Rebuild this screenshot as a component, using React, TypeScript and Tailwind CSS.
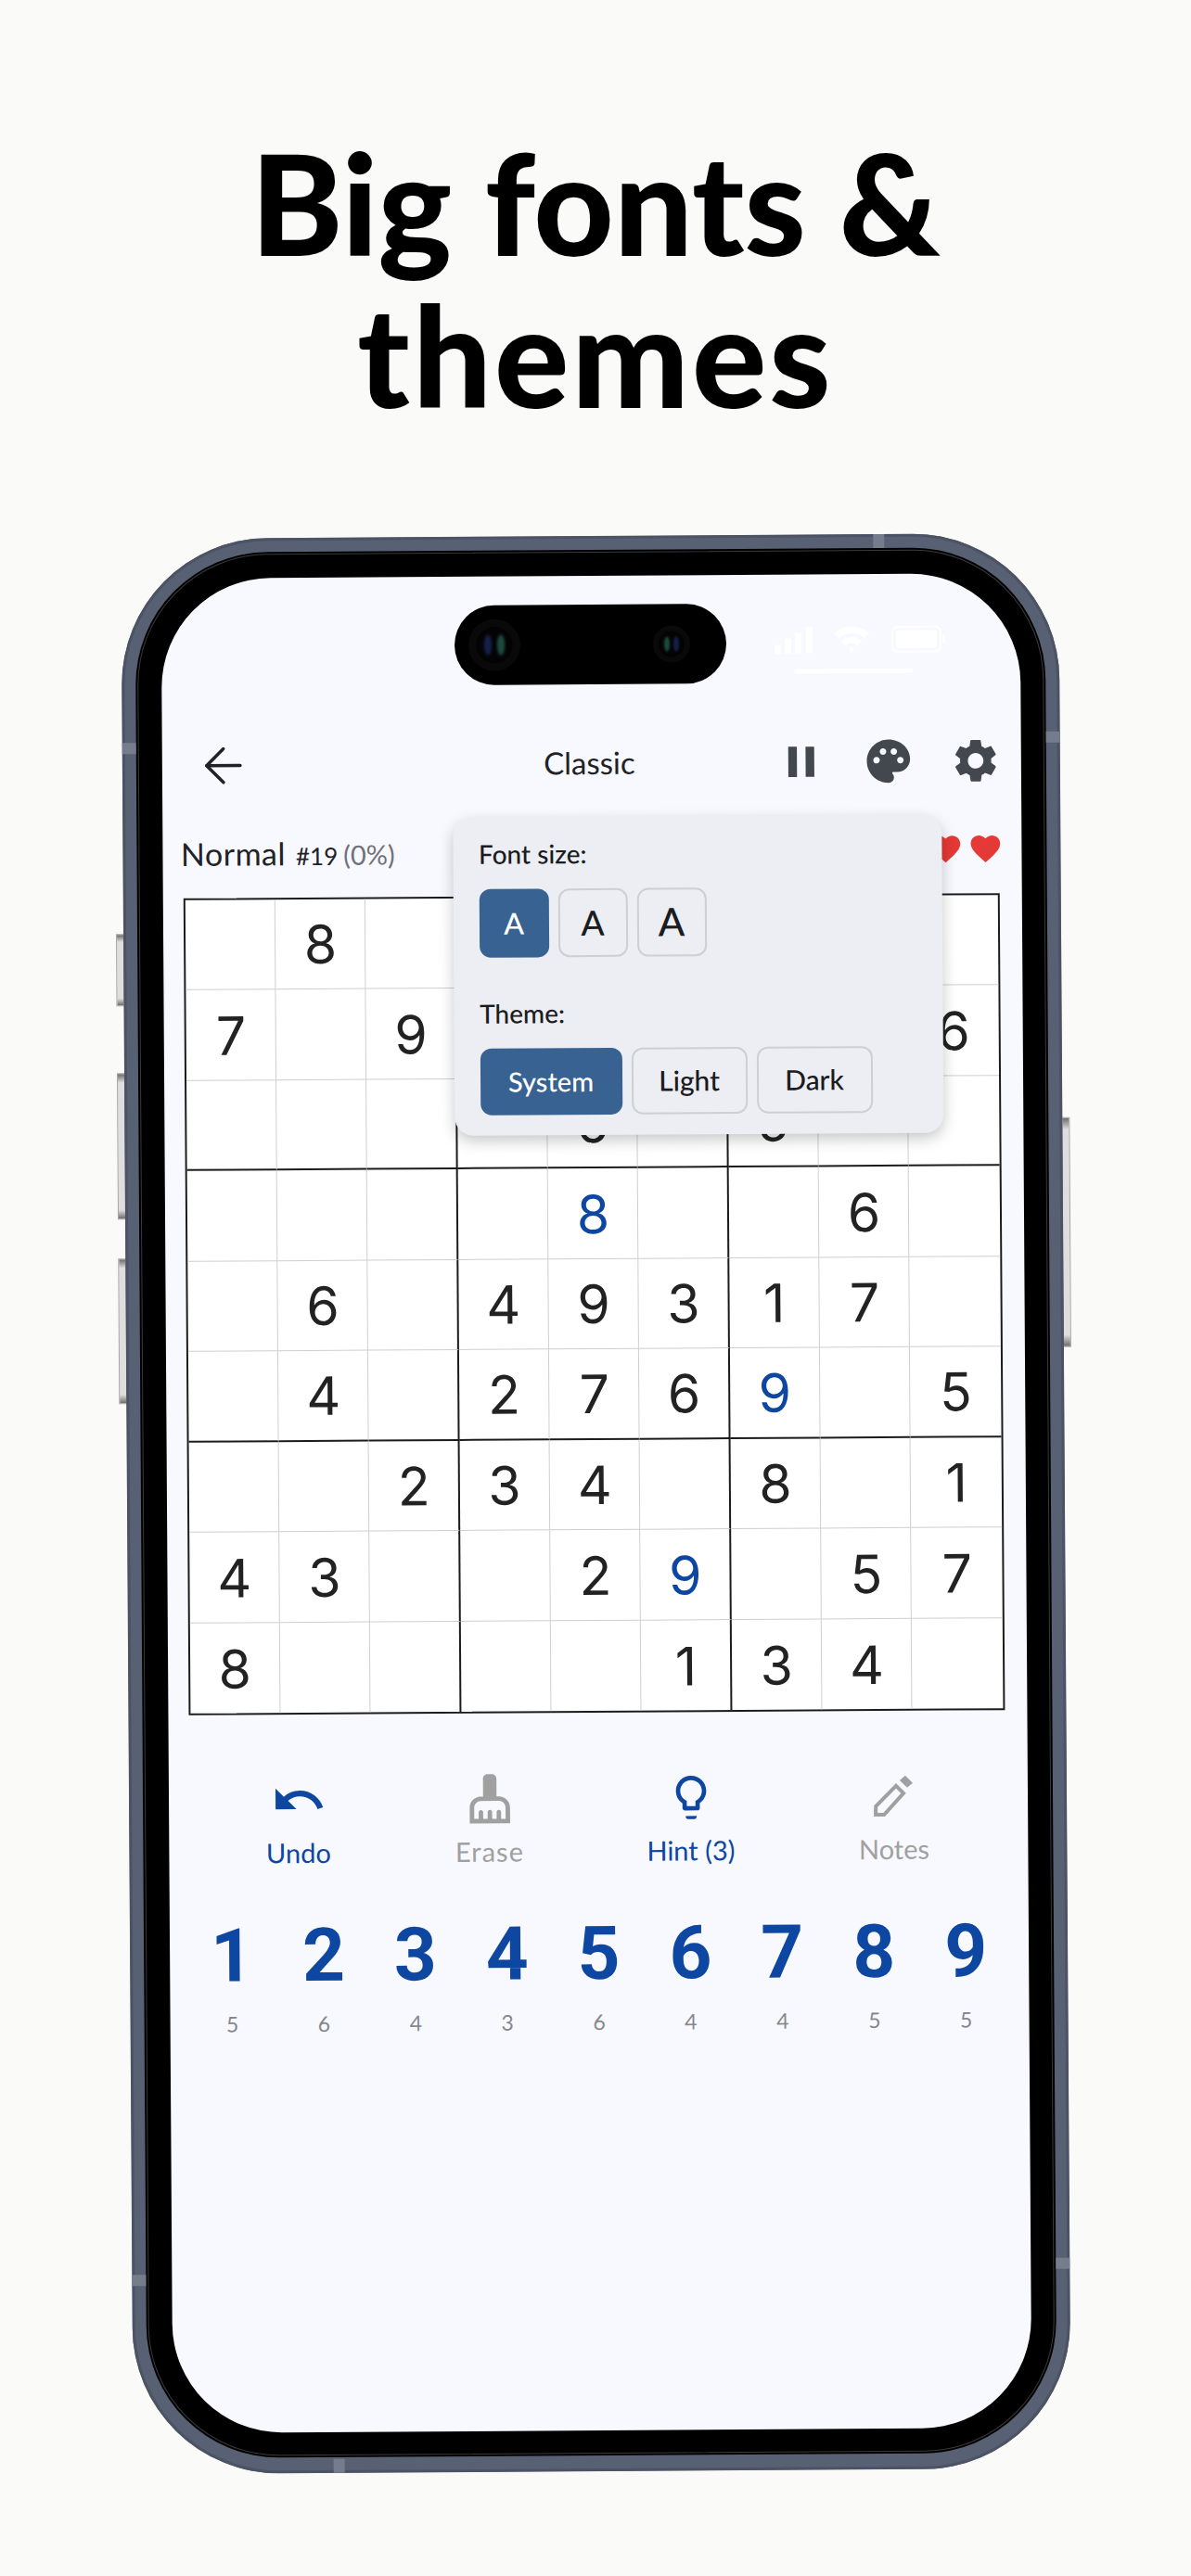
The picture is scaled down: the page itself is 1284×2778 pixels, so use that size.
import { ArrowLeft } from "lucide-react"
import { MdFavorite, MdPalette, MdPause, MdSettings, MdUndo } from "react-icons/md"

const board = [
  ["", "8", "", "", "", "", "", "", ""],
  ["7", "", "9", "", "", "", "", "", "6"],
  ["", "", "", "", "6", "", "5", "", ""],
  ["", "", "", "", "*8", "", "", "6", ""],
  ["", "6", "", "4", "9", "3", "1", "7", ""],
  ["", "4", "", "2", "7", "6", "*9", "", "5"],
  ["", "", "2", "3", "4", "", "8", "", "1"],
  ["4", "3", "", "", "2", "*9", "", "5", "7"],
  ["8", "", "", "", "", "1", "3", "4", ""],
]

const counts = [5, 6, 4, 3, 6, 4, 4, 5, 5]

function Camera({ size, flip }: { size: number; flip?: boolean }) {
  return (
    <svg width={size} height={size} viewBox="0 0 40 40">
      <circle cx="20" cy="20" r="20" fill="#090909" />
      <circle cx="20" cy="20" r="14" fill="#030304" />
      <ellipse className="blur-[1px]" cx={flip ? 25 : 15} cy="20" rx="3" ry="8" fill="#14204a" />
      <ellipse className="blur-[1px]" cx={flip ? 15 : 25} cy="20" rx="3" ry="8" fill="#1d4a3e" />
    </svg>
  )
}

function StatusIcons() {
  return (
    <svg className="absolute left-[661px] top-[56px]" width="190" height="52" viewBox="0 0 190 52" fill="#ffffff">
      <rect x="0" y="20" width="7" height="9" />
      <rect x="11" y="13" width="7" height="16" />
      <rect x="22" y="7" width="7" height="22" />
      <rect x="34" y="0" width="7" height="29" />
      <path d="M64 8 C74 -2 92 -2 102 8 L97 13 C90 6 76 6 69 13 Z" />
      <path d="M72 16 C78 10 88 10 94 16 L89 21 C85 17 81 17 77 21 Z" />
      <path d="M80 24 C82 22 84 22 86 24 L83 29 Z" />
      <rect x="127" y="1" width="52" height="27" rx="6" fill="none" stroke="#ffffff" strokeWidth="2" />
      <rect x="131" y="5" width="44" height="19" rx="3" />
      <rect x="181" y="10" width="3" height="9" rx="1" />
      <rect x="21" y="46" width="128" height="5" rx="2" />
    </svg>
  )
}

function Cell({ value, row, col }: { value: string; row: number; col: number }) {
  const right = col === 8 ? "" : col === 2 || col === 5 ? "border-r-2 border-r-[#1c1c1c]" : "border-r border-r-[#cfcfcf]"
  const bottom = row === 8 ? "" : row === 2 || row === 5 ? "border-b-2 border-b-[#1c1c1c]" : "border-b border-b-[#cfcfcf]"
  const hint = value.startsWith("*")
  return (
    <div className={`flex items-center justify-center h-[97.5px] pt-[2px] pl-[1px] ${right} ${bottom}`}>
      <span className={`font-[Inter,sans-serif] font-normal text-[57px] leading-none ${hint ? "text-[#0d47a1]" : "text-[#222222]"}`}>
        {value.replace("*", "")}
      </span>
    </div>
  )
}

function Popup() {
  return (
    <div className="absolute left-[313px] top-[260px] w-[527px] h-[343px] rounded-[20px] bg-[#eceef4] pl-[28px] pt-[22px] text-[#1b1c20] shadow-[0_6px_16px_rgba(0,0,0,0.22)]">
      <div className="h-[34px] text-[28px] leading-[34px] font-medium">Font size:</div>
      <div className="mt-[21px] flex gap-[10px]">
        <div className="flex items-center justify-center w-[75px] h-[74px] rounded-[12px] bg-[#376291] text-white text-[32px] font-medium">A</div>
        <div className="flex items-center justify-center w-[75px] h-[74px] rounded-[12px] border-2 border-[#cdcfd4] text-[37px] font-medium">A</div>
        <div className="flex items-center justify-center w-[75px] h-[74px] rounded-[12px] border-2 border-[#cdcfd4] text-[42px] font-medium">A</div>
      </div>
      <div className="mt-[43px] h-[34px] text-[28px] leading-[34px] font-medium">Theme:</div>
      <div className="mt-[21px] flex gap-[10px]">
        <div className="flex items-center justify-center w-[153px] h-[72px] rounded-[12px] bg-[#376291] text-white text-[29px] font-medium">System</div>
        <div className="flex items-center justify-center w-[125px] h-[72px] rounded-[12px] border-2 border-[#cdcfd4] text-[30px] font-medium">Light</div>
        <div className="flex items-center justify-center w-[125px] h-[72px] rounded-[12px] border-2 border-[#cdcfd4] text-[30px] font-medium">Dark</div>
      </div>
    </div>
  )
}

function Actions() {
  return (
    <div className="mt-[64px] pl-[33px] grid grid-cols-[214px_198px_236px_202px]">
      <div className="flex flex-col items-center text-[#0d47a1]">
        <div className="flex items-center justify-center h-[56px]">
          <MdUndo size={60} />
        </div>
        <div className="mt-[9px] h-[40px] text-[29px] leading-[40px]">Undo</div>
      </div>
      <div className="flex flex-col items-center text-[#a0a0a0]">
        <div className="flex items-center justify-center h-[56px]">
          <svg width="58" height="58" viewBox="0 0 24 24" fill="currentColor">
            <path d="M16 11h-1V3c0-1.1-.9-2-2-2h-2c-1.1 0-2 .9-2 2v8H8c-2.76 0-5 2.24-5 5v7h18v-7c0-2.76-2.24-5-5-5zm3 10h-2v-3c0-.55-.45-1-1-1s-1 .45-1 1v3h-2v-3c0-.55-.45-1-1-1s-1 .45-1 1v3H9v-3c0-.55-.45-1-1-1s-1 .45-1 1v3H5v-5c0-1.65 1.35-3 3-3h8c1.65 0 3 1.35 3 3v5z" />
          </svg>
        </div>
        <div className="mt-[9px] h-[40px] text-[29px] leading-[40px] tracking-[1px]">Erase</div>
      </div>
      <div className="flex flex-col items-center text-[#0d47a1]">
        <div className="flex items-center justify-center h-[56px]">
          <svg width="56" height="56" viewBox="0 0 24 24" fill="currentColor">
            <path d="M9.5 21c0 .5.4 1 1 1h3c.6 0 1-.5 1-1v-.4h-5v.4zm2.5-19C8.1 2 5 5.1 5 9c0 2.4 1.2 4.5 3 5.7V17c0 .5.4 1 1 1h6c.6 0 1-.5 1-1v-2.3c1.8-1.3 3-3.4 3-5.7 0-3.9-3.1-7-7-7zm2.9 11.1l-.9.6V16h-4v-2.3l-.8-.6C7.8 12.2 7 10.6 7 9c0-2.8 2.2-5 5-5s5 2.2 5 5c0 1.6-.8 3.2-2.1 4.1z" />
          </svg>
        </div>
        <div className="mt-[9px] h-[40px] text-[29px] leading-[40px]">Hint (3)</div>
      </div>
      <div className="flex flex-col items-center text-[#a0a0a0]">
        <div className="flex items-center justify-center h-[56px]">
          <svg width="43" height="44" viewBox="0 0 43 44" fill="currentColor">
            <path d="M2 42 V33 L24 11 L32 19 L11 42 Z" fill="none" stroke="currentColor" strokeWidth="4" />
            <path d="M0 44 V36 L8 44 Z" />
            <path d="M28 5 L34 0 L42 8 L36 13 Z" />
          </svg>
        </div>
        <div className="mt-[9px] h-[40px] text-[29px] leading-[40px]">Notes</div>
      </div>
    </div>
  )
}

function Screen() {
  return (
    <div className="relative h-[2000px] rounded-[118px] bg-[#f8f9ff] overflow-hidden">
      <div className="absolute left-[316px] top-[31px] w-[293px] h-[86px] rounded-full bg-black flex items-center justify-between pl-[15px] pr-[39px]">
        <Camera size={56} />
        <Camera size={40} flip />
      </div>
      <StatusIcons />

      <div className="pt-[171px]">
        <div className="h-[60px] grid grid-cols-[337px_178px_1fr] items-center pl-[35px] pr-[21px] text-[#1f2226]">
          <ArrowLeft size={62} strokeWidth={1.35} />
          <div className="text-center text-[33px] leading-none">Classic</div>
          <div className="flex justify-end gap-[38px] text-[#43474e]">
            <MdPause size={56} />
            <MdPalette size={56} />
            <MdSettings size={56} />
          </div>
        </div>

        <div className="mt-[41px] h-[50px] flex items-center justify-between pl-[20px] pr-[20px]">
          <div className="flex items-baseline text-[#1f2226]">
            <span className="text-[34px] tracking-[0.5px]">Normal</span>
            <span className="ml-[11px] text-[26px]">#19</span>
            <span className="ml-[6px] text-[29px] text-[#6f7278]">(0%)</span>
          </div>
          <div className="flex gap-[5px] text-[#e53935]">
            <MdFavorite size={38} />
            <MdFavorite size={38} />
          </div>
        </div>

        <div className="mt-[23px] ml-[22px] w-[880px] border-2 border-[#1c1c1c] bg-white grid grid-cols-9">
          {board.map((r, i) => r.map((v, j) => <Cell key={`${i}-${j}`} value={v} row={i} col={j} />))}
        </div>

        <Actions />

        <div className="mt-[51px] px-[18px] grid grid-cols-9 text-center">
          {[1, 2, 3, 4, 5, 6, 7, 8, 9].map((n) => (
            <div key={n} className="h-[80px] font-[Roboto,sans-serif] text-[80px] leading-[80px] font-bold text-[#0d47a1]">{n}</div>
          ))}
        </div>
        <div className="mt-[18px] px-[18px] grid grid-cols-9 text-center">
          {counts.map((c, i) => (
            <div key={i} className="h-[30px] text-[23px] leading-[30px] text-[#85878c]">{c}</div>
          ))}
        </div>
      </div>

      <Popup />
    </div>
  )
}

export default function App() {
  return (
    <div className="w-[1284px] h-[2778px] overflow-hidden bg-[#fafaf8] font-[Lato,sans-serif]">
      <h1 className="pt-[136px] text-center text-[150px] leading-[164px] font-black text-black">
        Big fonts &amp;
        <br />
        <span className="tracking-[3px]">themes</span>
      </h1>

      {/* phone */}
      <div className="relative mx-auto mt-[114px] w-[1011px] h-[2087px] rotate-[-0.37deg]">
        <div className="absolute -left-[8px] top-[426px] w-[9px] h-[78px] border border-[#a5a5a5] bg-[linear-gradient(#6b6b6b,#dedede_10%,#dedede_90%,#6b6b6b)]" />
        <div className="absolute -left-[8px] top-[576px] w-[9px] h-[158px] border border-[#a5a5a5] bg-[linear-gradient(#6b6b6b,#dedede_6%,#dedede_94%,#6b6b6b)]" />
        <div className="absolute -left-[8px] top-[776px] w-[9px] h-[157px] border border-[#a5a5a5] bg-[linear-gradient(#6b6b6b,#dedede_6%,#dedede_94%,#6b6b6b)]" />
        <div className="absolute -right-[8px] top-[630px] w-[9px] h-[248px] border border-[#a5a5a5] bg-[linear-gradient(#6b6b6b,#dedede_5%,#dedede_95%,#6b6b6b)]" />

        <div className="relative h-full rounded-[158px] bg-[#586073] p-[15px] shadow-[inset_0_0_0_3px_#4c5365]">
          <div className="absolute left-0 top-[220px] w-[15px] h-[12px] bg-[#757c8c]" />
          <div className="absolute left-0 top-[1872px] w-[15px] h-[12px] bg-[#757c8c]" />
          <div className="absolute right-0 top-[214px] w-[15px] h-[12px] bg-[#757c8c]" />
          <div className="absolute right-0 top-[1860px] w-[15px] h-[12px] bg-[#757c8c]" />
          <div className="absolute left-[811px] top-0 w-[12px] h-[15px] bg-[#757c8c]" />
          <div className="absolute left-[216px] bottom-0 w-[12px] h-[15px] bg-[#757c8c]" />

          <div className="rounded-[143px] bg-black p-[2px]">
            <div className="rounded-[141px] border-[1.5px] border-[#3a3a3a] p-[24.5px]">
              <Screen />
            </div>
          </div>
        </div>
      </div>
    </div>
  )
}
